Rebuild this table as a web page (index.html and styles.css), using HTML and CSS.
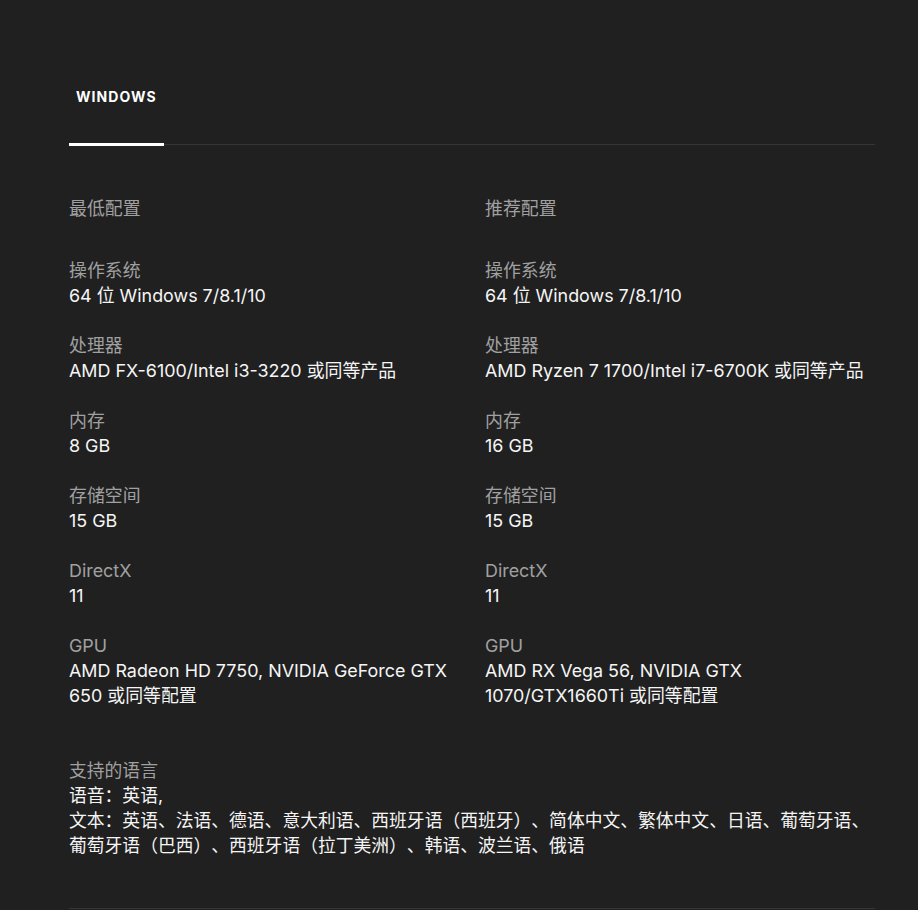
FILE: index.html
```html
<!DOCTYPE html>
<html lang="zh-CN">
<head>
<meta charset="utf-8">
<title>系统需求</title>
<link rel="stylesheet" href="styles.css">
</head>
<body>
<div class="page">
  <div class="tabs">
    <div class="tab active">WINDOWS</div>
  </div>

  <div class="specs">
    <div class="col">
      <div class="col-title">最低配置</div>
      <div class="item"><div class="label">操作系统</div><div class="value">64 位 Windows 7/8.1/10</div></div>
      <div class="item"><div class="label">处理器</div><div class="value">AMD FX-6100/Intel i3-3220 或同等产品</div></div>
      <div class="item"><div class="label">内存</div><div class="value">8 GB</div></div>
      <div class="item"><div class="label">存储空间</div><div class="value">15 GB</div></div>
      <div class="item"><div class="label">DirectX</div><div class="value">11</div></div>
      <div class="item"><div class="label">GPU</div><div class="value">AMD Radeon HD 7750, NVIDIA GeForce GTX 650 或同等配置</div></div>
    </div>
    <div class="col">
      <div class="col-title">推荐配置</div>
      <div class="item"><div class="label">操作系统</div><div class="value">64 位 Windows 7/8.1/10</div></div>
      <div class="item"><div class="label">处理器</div><div class="value">AMD Ryzen 7 1700/Intel i7-6700K 或同等产品</div></div>
      <div class="item"><div class="label">内存</div><div class="value">16 GB</div></div>
      <div class="item"><div class="label">存储空间</div><div class="value">15 GB</div></div>
      <div class="item"><div class="label">DirectX</div><div class="value">11</div></div>
      <div class="item"><div class="label">GPU</div><div class="value">AMD RX Vega 56, NVIDIA GTX 1070/GTX1660Ti 或同等配置</div></div>
    </div>
  </div>

  <div class="languages">
    <div class="label">支持的语言</div>
    <div class="value">语音：英语,</div>
    <div class="value">文本：英语、法语、德语、意大利语、西班牙语（西班牙）、简体中文、繁体中文、日语、葡萄牙语、葡萄牙语（巴西）、西班牙语（拉丁美洲）、韩语、波兰语、俄语</div>
  </div>

  <div class="bottom-rule"></div>
</div>
</body>
</html>
```

FILE: styles.css
```css
html, body {
  margin: 0;
  padding: 0;
  background: #202020;
}

body {
  font-family: Inter, "Noto Sans CJK SC", sans-serif;
  font-size: 17.9px;
  line-height: 25px;
  color: #f5f5f5;
}

.page {
  margin: 0 43px 0 69px;
  padding-top: 48px;
}

.tabs {
  display: flex;
  border-bottom: 1px solid #363636;
}

.tab {
  padding: 39px 7px 36px;
  margin-bottom: -2px;
  font-size: 14px;
  line-height: 20px;
  font-weight: 700;
  letter-spacing: 1.05px;
  color: #ffffff;
  border-bottom: 3px solid #ffffff;
}

.specs {
  display: grid;
  grid-template-columns: 382px 382px;
  column-gap: 34px;
  margin-top: 51px;
}

.col-title {
  color: #a0a0a0;
  margin-bottom: 37px;
}

.item {
  margin-bottom: 25px;
}

.label {
  color: #a0a0a0;
}

.value {
  color: #f5f5f5;
}

.languages {
  margin-top: 25px;
  font-size: 17.8px;
  text-spacing-trim: space-all;
}

.bottom-rule {
  margin-top: 50px;
  height: 1px;
  background: #363636;
}
```
